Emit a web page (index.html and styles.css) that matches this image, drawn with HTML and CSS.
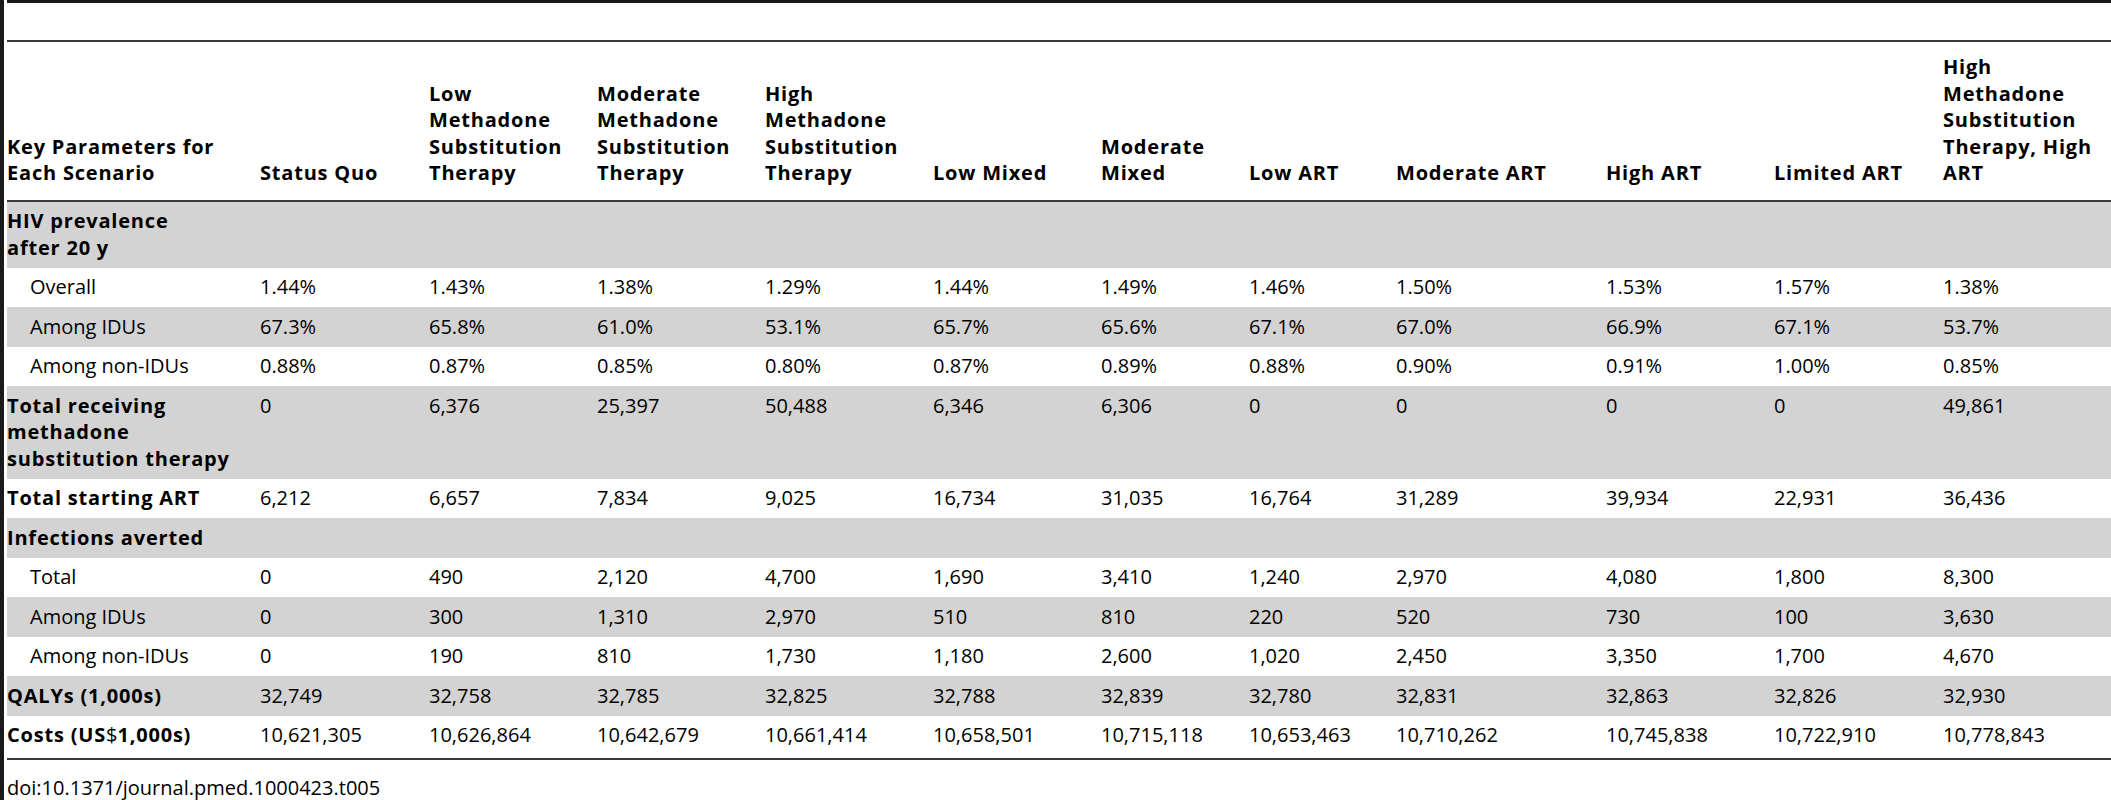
FILE: index.html
```html
<!DOCTYPE html>
<html lang="en">
<head>
<meta charset="utf-8">
<title>Table 5 – Key Parameters for Each Scenario</title>
<link rel="stylesheet" href="styles.css">
</head>
<body>
<div class="frame">
  <div class="topbar"></div>
  <table class="data">
    <colgroup>
      <col class="w253"><col class="w169"><col class="w168"><col class="w168"><col class="w168"><col class="w168">
      <col class="w148"><col class="w147"><col class="w210"><col class="w168"><col class="w169"><col class="w168">
    </colgroup>
    <thead>
      <tr>
        <th>Key Parameters for<br>Each Scenario</th>
        <th>Status Quo</th>
        <th>Low<br>Methadone<br>Substitution<br>Therapy</th>
        <th>Moderate<br>Methadone<br>Substitution<br>Therapy</th>
        <th>High<br>Methadone<br>Substitution<br>Therapy</th>
        <th>Low Mixed</th>
        <th>Moderate<br>Mixed</th>
        <th>Low ART</th>
        <th>Moderate ART</th>
        <th>High ART</th>
        <th>Limited ART</th>
        <th>High<br>Methadone<br>Substitution<br>Therapy, High<br>ART</th>
      </tr>
    </thead>
    <tbody>
      <tr class="shade"><th>HIV prevalence<br>after 20 y</th><td></td><td></td><td></td><td></td><td></td><td></td><td></td><td></td><td></td><td></td><td></td></tr>
      <tr><th class="sub">Overall</th><td>1.44%</td><td>1.43%</td><td>1.38%</td><td>1.29%</td><td>1.44%</td><td>1.49%</td><td>1.46%</td><td>1.50%</td><td>1.53%</td><td>1.57%</td><td>1.38%</td></tr>
      <tr class="shade"><th class="sub">Among IDUs</th><td>67.3%</td><td>65.8%</td><td>61.0%</td><td>53.1%</td><td>65.7%</td><td>65.6%</td><td>67.1%</td><td>67.0%</td><td>66.9%</td><td>67.1%</td><td>53.7%</td></tr>
      <tr><th class="sub">Among non-IDUs</th><td>0.88%</td><td>0.87%</td><td>0.85%</td><td>0.80%</td><td>0.87%</td><td>0.89%</td><td>0.88%</td><td>0.90%</td><td>0.91%</td><td>1.00%</td><td>0.85%</td></tr>
      <tr class="shade"><th>Total receiving<br>methadone<br>substitution therapy</th><td>0</td><td>6,376</td><td>25,397</td><td>50,488</td><td>6,346</td><td>6,306</td><td>0</td><td>0</td><td>0</td><td>0</td><td>49,861</td></tr>
      <tr><th>Total starting ART</th><td>6,212</td><td>6,657</td><td>7,834</td><td>9,025</td><td>16,734</td><td>31,035</td><td>16,764</td><td>31,289</td><td>39,934</td><td>22,931</td><td>36,436</td></tr>
      <tr class="shade"><th>Infections averted</th><td></td><td></td><td></td><td></td><td></td><td></td><td></td><td></td><td></td><td></td><td></td></tr>
      <tr><th class="sub">Total</th><td>0</td><td>490</td><td>2,120</td><td>4,700</td><td>1,690</td><td>3,410</td><td>1,240</td><td>2,970</td><td>4,080</td><td>1,800</td><td>8,300</td></tr>
      <tr class="shade"><th class="sub">Among IDUs</th><td>0</td><td>300</td><td>1,310</td><td>2,970</td><td>510</td><td>810</td><td>220</td><td>520</td><td>730</td><td>100</td><td>3,630</td></tr>
      <tr><th class="sub">Among non-IDUs</th><td>0</td><td>190</td><td>810</td><td>1,730</td><td>1,180</td><td>2,600</td><td>1,020</td><td>2,450</td><td>3,350</td><td>1,700</td><td>4,670</td></tr>
      <tr class="shade"><th>QALYs (1,000s)</th><td>32,749</td><td>32,758</td><td>32,785</td><td>32,825</td><td>32,788</td><td>32,839</td><td>32,780</td><td>32,831</td><td>32,863</td><td>32,826</td><td>32,930</td></tr>
      <tr class="last"><th>Costs (US<span class="cur">$</span>1,000s)</th><td>10,621,305</td><td>10,626,864</td><td>10,642,679</td><td>10,661,414</td><td>10,658,501</td><td>10,715,118</td><td>10,653,463</td><td>10,710,262</td><td>10,745,838</td><td>10,722,910</td><td>10,778,843</td></tr>
    </tbody>
  </table>
  <p class="doi">doi:10.1371/journal.pmed.1000423.t005</p>
</div>
</body>
</html>
```

FILE: styles.css
```css
html, body {
  margin: 0;
  padding: 0;
  background: #ffffff;
}

body {
  font-family: "Open Sans", "Liberation Sans", sans-serif;
  font-size: 20px;
  color: #000000;
}

.frame {
  box-sizing: border-box;
  height: 100vh;
  overflow: hidden;
  border-left: 4px solid #1a1a1a;
  padding-left: 3px;
}

.topbar {
  height: 3px;
  background: #1a1a1a;
  margin-bottom: 37px;
}

.data {
  table-layout: fixed;
  width: 2104px;
  border-collapse: collapse;
  border-top: 2px solid #3a3a3a;
  border-bottom: 2px solid #3a3a3a;
}

.w253 { width: 253px; }
.w210 { width: 210px; }
.w169 { width: 169px; }
.w168 { width: 168px; }
.w148 { width: 148px; }
.w147 { width: 147px; }

.data th,
.data td {
  padding: 6.5px 8px 6.5px 0;
  line-height: 26.5px;
  text-align: left;
  vertical-align: top;
  white-space: nowrap;
}

.data th {
  font-weight: 700;
  letter-spacing: 0.8px;
}

.data td {
  font-weight: 400;
}

.data thead th {
  vertical-align: bottom;
  padding-top: 12px;
  padding-bottom: 13px;
  line-height: 26.6px;
  border-bottom: 2px solid #3a3a3a;
}

.data tbody th.sub {
  font-weight: 400;
  letter-spacing: 0;
  padding-left: 23px;
}

.data tr.shade {
  background: #d3d3d3;
}

.data tr.last th,
.data tr.last td {
  padding-bottom: 9px;
}

.cur {
  font-weight: 400;
  letter-spacing: 0;
}

.doi {
  margin: 16px 0 0;
  line-height: 24px;
  font-size: 20px;
}
```
